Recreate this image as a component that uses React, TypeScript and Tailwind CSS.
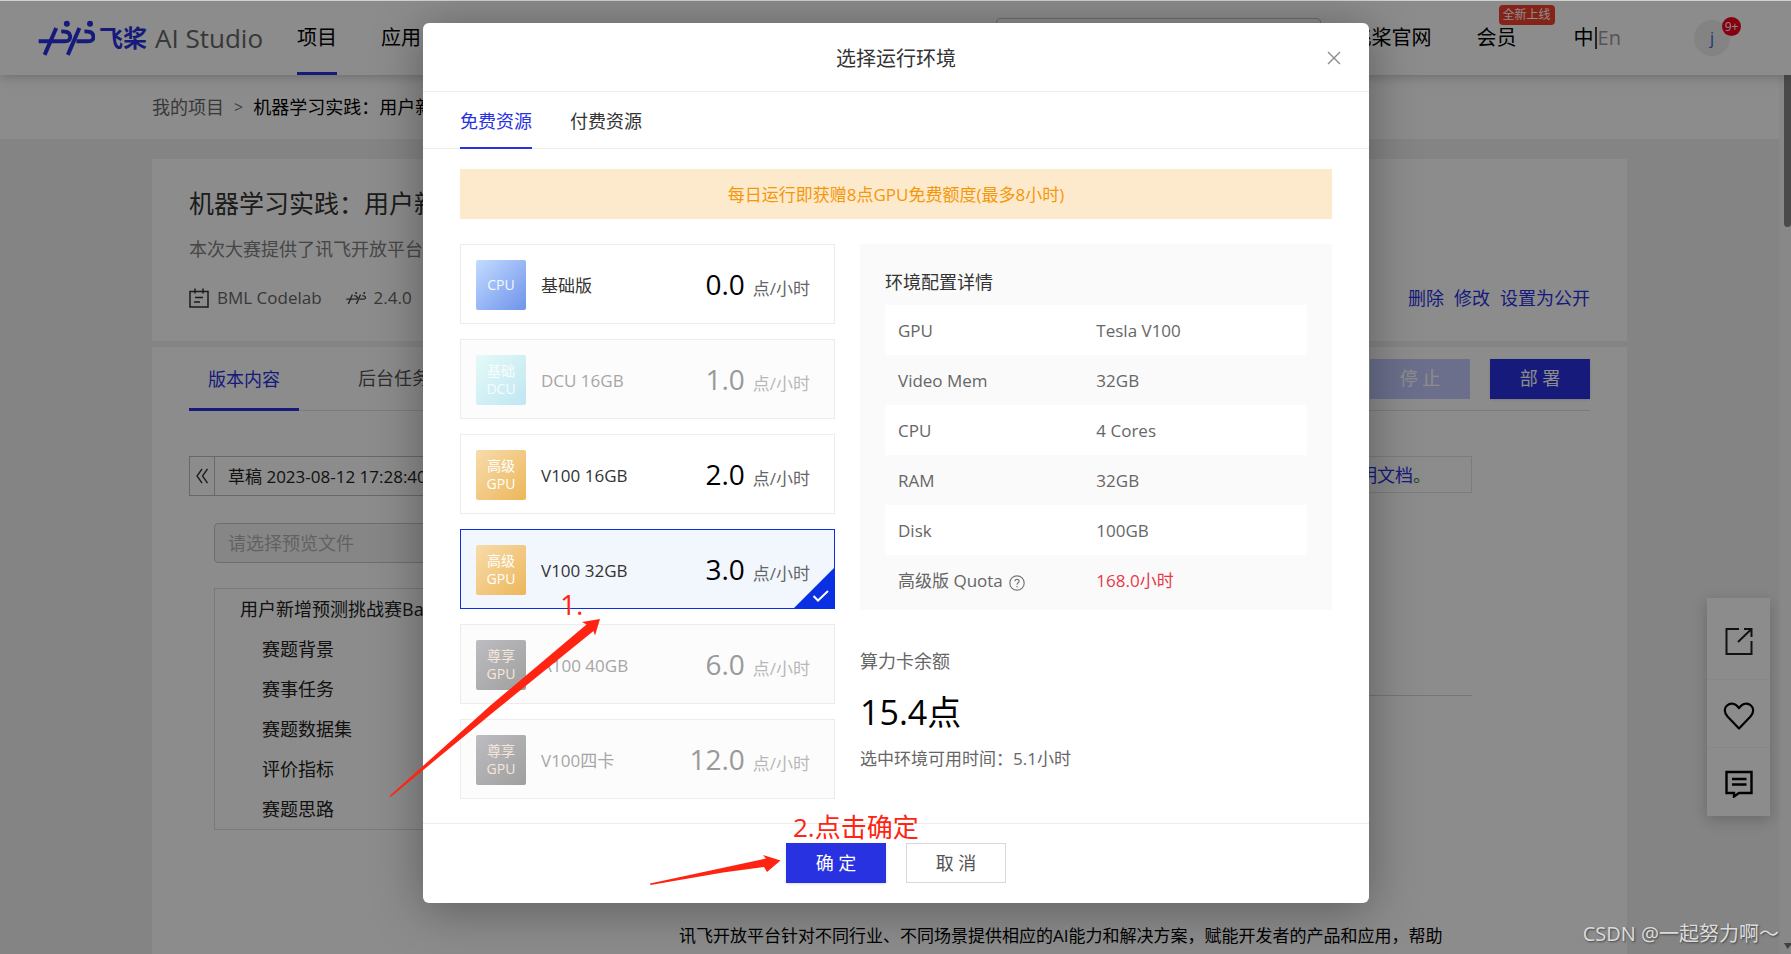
import { useState } from "react";

type Tone = "cpu" | "dcu" | "gpu" | "premium";

interface Environment {
  id: string;
  tone: Tone;
  badge: string[];
  name: string;
  price: string;
  disabled?: boolean;
}

const environments: Environment[] = [
  { id: "cpu", tone: "cpu", badge: ["CPU"], name: "基础版", price: "0.0" },
  { id: "dcu", tone: "dcu", badge: ["基础", "DCU"], name: "DCU 16GB", price: "1.0", disabled: true },
  { id: "v100-16", tone: "gpu", badge: ["高级", "GPU"], name: "V100 16GB", price: "2.0" },
  { id: "v100-32", tone: "gpu", badge: ["高级", "GPU"], name: "V100 32GB", price: "3.0" },
  { id: "a100-40", tone: "premium", badge: ["尊享", "GPU"], name: "A100 40GB", price: "6.0", disabled: true },
  { id: "v100-x4", tone: "premium", badge: ["尊享", "GPU"], name: "V100四卡", price: "12.0", disabled: true },
];

const toneClass: Record<Tone, string> = {
  cpu: "bg-linear-to-br from-[#c4dbff] to-[#6f93ea] text-white/90",
  dcu: "bg-linear-to-br from-[#e4faf7] to-[#bfe6f2] text-white/80",
  gpu: "bg-linear-to-br from-[#f7dcaa] via-[#f2c983] to-[#edb657] text-white",
  premium: "bg-linear-to-br from-[#bdbdc2] to-[#9f9f9f] text-[#f6e6d8]",
};

const specs = [
  ["GPU", "Tesla V100"],
  ["Video Mem", "32GB"],
  ["CPU", "4 Cores"],
  ["RAM", "32GB"],
  ["Disk", "100GB"],
];

const outline = ["赛题背景", "赛事任务", "赛题数据集", "评价指标", "赛题思路"];

function PaddleMark({ className }: { className: string }) {
  return (
    <svg viewBox="22 34 172 106" className={className} fill="none" stroke="currentColor" strokeWidth="12" aria-hidden="true">
      <path d="M77 57 L42 138" />
      <path d="M24 97 H102 C116 97 121 90 119 80 C116 69 108 67 92 67" />
      <path d="M147 57 L112 138" />
      <path d="M138 97 H172 C186 97 191 90 189 80 C186 69 178 67 162 67" />
      <circle cx="109" cy="44" r="9" fill="currentColor" stroke="none" />
      <circle cx="179" cy="44" r="9" fill="currentColor" stroke="none" />
    </svg>
  );
}

function Header() {
  return (
    <header className="relative z-10 flex h-[75px] shrink-0 items-center bg-white pr-[61px] pl-[38px] text-[20px] text-black shadow-[0_1px_12px_rgba(0,0,0,0.25)]">
      <a href="#home" className="flex items-center text-[#2932e1]">
        <PaddleMark className="h-[36px] w-[57px]" />
        <span className="ml-1 text-[24px] leading-[36px] font-bold">飞桨</span>
        <span className="ml-2 text-[26px] leading-[36px] text-[#666]">AI Studio</span>
      </a>
      <nav className="ml-[34px] flex h-full gap-11">
        <a href="#projects" className="flex items-center border-b-3 border-[#2932e1] pt-1">项目</a>
        <a href="#apps" className="flex items-center pt-px">应用</a>
      </nav>
      <div className="ml-auto flex h-full items-center pt-px">
        <input aria-label="搜索" className="h-10 w-[325px] rounded-sm border border-[#c4c4c4] bg-white" />
        <a href="#site" className="ml-[31px]">飞桨官网</a>
        <a href="#member" className="relative ml-[45px]">
          会员
          <span className="absolute -top-[18px] left-[22px] rounded-sm bg-[#f5402f] px-1 text-[12px] leading-5 whitespace-nowrap text-white">
            全新上线
          </span>
        </a>
        <a href="#lang" className="ml-[57px] flex items-center">
          中
          <span className="mx-px h-[22px] w-0.5 bg-[#444]" />
          <span className="text-[#999]">En</span>
        </a>
        <a href="#me" className="relative ml-[73px] flex size-9 items-center justify-center rounded-full bg-[#eee] text-[16px] text-[#3b5fd9]">
          j
          <span className="absolute -top-[3px] -right-[11px] flex size-[19px] items-center justify-center rounded-full bg-[#f5001d] text-[12px] text-white">
            9+
          </span>
        </a>
      </div>
    </header>
  );
}

function ProjectCard() {
  return (
    <section className="bg-white px-[37px] pt-6 pb-[29px]">
      <h1 className="text-[25px] leading-10 text-[#333]">机器学习实践：用户新增</h1>
      <p className="mt-3 leading-7 text-[#808080]">本次大赛提供了讯飞开放平台海量</p>
      <div className="mt-[21px] flex items-center leading-7 text-[#666]">
        <svg viewBox="0 0 20 20" className="size-5" fill="none" stroke="#333" strokeWidth="1.5" aria-hidden="true">
          <path d="M1 3.5 H19 V19 H1 Z M6 0.5 V5.5 M14 0.5 V5.5 M6 9.5 H14 M5 14 H11" />
        </svg>
        <span className="ml-2 text-[17px]">BML Codelab</span>
        <PaddleMark className="ml-6 h-[16px] w-[20px] text-[#444]" />
        <span className="ml-2 text-[17px]">2.4.0</span>
        <div className="ml-auto flex gap-2.5 text-[#2932e1]">
          <a href="#delete">删除</a>
          <a href="#edit">修改</a>
          <a href="#publish">设置为公开</a>
        </div>
      </div>
    </section>
  );
}

function VersionCard() {
  return (
    <section className="mt-1.5 flex-1 bg-white px-[37px]">
      <div className="flex h-16 border-b border-[#e2e2e2]">
        <a href="#versions" className="-mb-px flex items-center border-b-3 border-[#2932e1] px-[19px] pt-[3px] text-[#2932e1]">版本内容</a>
        <a href="#tasks" className="ml-[59px] flex items-center text-[#555]">后台任务</a>
        <div className="ml-auto flex items-center gap-5">
          <button type="button" disabled className="h-10 w-[100px] bg-[#c4cbff] text-white">停 止</button>
          <button type="button" className="h-10 w-[100px] bg-[#2932e1] text-white shadow-sm">部 署</button>
        </div>
      </div>
      <div className="flex gap-[65px] pt-[45px] pr-[118px]">
        <aside className="w-[425px] shrink-0">
          <div className="flex h-10 border border-[#bdbdbd] text-[#222]">
            <button type="button" aria-label="收起" className="flex w-[25px] items-center justify-center border-r border-[#bdbdbd]">
              <svg viewBox="0 0 12 16" className="h-4 w-3" fill="none" stroke="#333" strokeWidth="1.3" aria-hidden="true">
                <path d="M6 1 L1 8 L6 15 M11.500 1 L6.500 8 L11.500 15" />
              </svg>
            </button>
            <span className="pl-[13px] text-[17px] leading-10">草稿 2023-08-12 17:28:40</span>
          </div>
          <div className="pl-[25px]">
            <select
              aria-label="预览文件"
              disabled
              className="mt-[27px] h-10 w-full appearance-none rounded-sm border border-[#c8c8c8] bg-[#f5f5f5] pl-[13px] text-[#b3b3b3] opacity-100"
            >
              <option>请选择预览文件</option>
            </select>
            <ul className="mt-[25px] border border-[#ddd] leading-10 text-[#222]">
              <li className="pl-[25px]">
                用户新增预测挑战赛Baseline
                <ul className="pl-[22px]">
                  {outline.map((item) => (
                    <li key={item}>{item}</li>
                  ))}
                </ul>
              </li>
            </ul>
          </div>
        </aside>
        <article className="min-w-0 flex-1">
          <div className="h-[37px] border border-[#e2e2e2] pr-10 text-right leading-9 text-[#2932e1]">
            <a href="#docs">说明文档</a>
            <span className="text-[#2f7d32]">。</span>
          </div>
          <hr className="mt-[202px] border-[#d8d8d8]" />
          <p className="mt-[226px] text-[17px] leading-7 whitespace-nowrap text-black">
            讯飞开放平台针对不同行业、不同场景提供相应的AI能力和解决方案，赋能开发者的产品和应用，帮助
          </p>
        </article>
      </div>
    </section>
  );
}

function SideTools() {
  return (
    <div className="absolute right-[21px] bottom-[138px] flex w-[63px] flex-col items-center bg-white shadow-[0_4px_14px_rgba(0,0,0,0.2)]">
      <button type="button" aria-label="分享" className="flex h-[82px] w-full items-center justify-center border-b border-[#f6f6f6] pt-1">
        <svg viewBox="0 0 28 28" className="size-7" fill="none" stroke="#222" strokeWidth="2" aria-hidden="true">
          <path d="M14 2 H1.500 V27 H26.500 V14 M19 2 H26.500 V10 M26 2.500 L13 15" />
        </svg>
      </button>
      <button type="button" aria-label="收藏" className="flex h-[68px] w-full items-center justify-center border-b border-[#f6f6f6] pt-1 text-black">
        <svg viewBox="0 0 32 28" className="h-7 w-8" fill="none" stroke="currentColor" strokeWidth="2.2" strokeLinejoin="round" aria-hidden="true">
          <path d="M16 26.500 L4.500 14.500 C1 10.500 1 6 4 3.500 C7.500 0.500 12.500 1 16 6 C19.500 1 24.500 0.500 28 3.500 C31 6 31 10.500 27.500 14.500 Z" />
        </svg>
      </button>
      <button type="button" aria-label="评论" className="flex h-[68px] w-full items-center justify-center pt-1 text-black">
        <svg viewBox="0 0 28 28" className="size-7" fill="none" stroke="currentColor" strokeWidth="2.400" aria-hidden="true">
          <path d="M1.500 2 H26.500 V23 H14 L9 26.500 V23 H1.500 Z M7 9 H21.500 M7 14.500 H21.500" />
        </svg>
      </button>
    </div>
  );
}

function EnvironmentOption({ env, selected, onSelect }: { env: Environment; selected: boolean; onSelect: () => void }) {
  return (
    <label
      className={
        "relative flex h-20 items-center border pr-6 pl-[15px] " +
        (selected
          ? "border-[#0b2fe3] bg-[#f2f7fe]"
          : env.disabled
            ? "border-[#ececec] bg-[#fcfcfc]"
            : "border-[#ececec] bg-white")
      }
    >
      <input type="radio" name="environment" className="sr-only" checked={selected} disabled={env.disabled} onChange={onSelect} />
      <span className={"mt-0.5 flex size-[50px] flex-col items-center justify-center rounded-xs text-[14px] leading-[18px] " + toneClass[env.tone]}>
        {env.badge.map((line) => (
          <span key={line}>{line}</span>
        ))}
      </span>
      <span className={"mt-1 ml-[15px] text-[17px] leading-7 " + (env.disabled ? "text-[#a6a6a6]" : "text-[#333]")}>{env.name}</span>
      <span className="ml-auto flex items-baseline gap-2">
        <span className={"text-[28px] leading-9 " + (env.disabled ? "text-[#999]" : "text-black")}>{env.price}</span>
        <span className={"text-[17px] " + (env.disabled ? "text-[#b8b8b8]" : "text-[#666]")}>点/小时</span>
      </span>
      {selected && (
        <svg viewBox="0 0 40 40" className="absolute right-0 bottom-0 size-10" aria-hidden="true">
          <path d="M40 0 V40 H0 Z" fill="#0b2fe3" />
          <path d="M19.500 28 L24 32.500 L34 23" fill="none" stroke="#fff" strokeWidth="2" />
        </svg>
      )}
    </label>
  );
}

function Annotations() {
  return (
    <div className="pointer-events-none absolute inset-0 text-[#ff2312]">
      <svg viewBox="0 0 946 880" className="absolute top-0 left-0 h-[880px] w-[946px] overflow-visible" fill="#ff2312" aria-hidden="true">
        <path d="M-33.500 773 L68 682 L163.500 601.500 L159 599 L177 596 L172 612.500 L170.500 608 L73 687 L-32.500 774 Z" />
        <path d="M227 860.500 L343 835.500 L340 832 L357.500 837.500 L344 849 L341 844 L300 849.500 L227.500 862 Z" />
      </svg>
      <span className="absolute top-[561px] left-[137px] text-[28px] leading-10">1.</span>
      <span className="absolute top-[784px] left-[370px] text-[26px] leading-10 whitespace-nowrap">2.点击确定</span>
    </div>
  );
}

function EnvironmentDialog() {
  const [selectedId, setSelectedId] = useState("v100-32");

  return (
    <div role="dialog" aria-modal="true" aria-labelledby="dialog-title" className="relative w-[946px] rounded-md bg-white shadow-[0_6px_50px_rgba(0,0,0,0.35)]">
      <div className="relative flex h-[69px] items-center justify-center border-b border-[#ececec]">
        <h2 id="dialog-title" className="pt-1 text-[20px] leading-8 text-[#333]">选择运行环境</h2>
        <button type="button" aria-label="关闭" className="absolute top-[28px] right-[28px]">
          <svg viewBox="0 0 14 14" className="h-[14px] w-[14px]" fill="none" stroke="#888" strokeWidth="1.300" aria-hidden="true">
            <path d="M1 1 L13 13 M13 1 L1 13" />
          </svg>
        </button>
      </div>
      <div role="tablist" className="flex h-[57px] gap-[38px] border-b border-[#ececec] px-[37px]">
        <button type="button" role="tab" aria-selected="true" className="-mb-px border-b-2 border-[#2932e1] pt-1 text-[#2932e1]">免费资源</button>
        <button type="button" role="tab" aria-selected="false" className="-mb-px border-b-2 border-transparent pt-1 text-[#333]">付费资源</button>
      </div>
      <div className="px-[37px] pt-5 pb-6">
        <p className="h-[50px] bg-[#fdeacd] text-center text-[17px] leading-[52px] text-[#f5970a]">每日运行即获赠8点GPU免费额度(最多8小时)</p>
        <div className="mt-[25px] flex gap-[25px]">
          <div className="flex w-[375px] flex-col gap-[15px]">
            {environments.map((env) => (
              <EnvironmentOption key={env.id} env={env} selected={env.id === selectedId} onSelect={() => setSelectedId(env.id)} />
            ))}
          </div>
          <div className="flex-1 text-[#666]">
            <div className="bg-[#fafafa] px-[25px] pb-[5px]">
              <h3 className="pt-6 pb-[9px] leading-7 text-[#333]">环境配置详情</h3>
              <table className="w-full text-left text-[17px]">
                <tbody>
                  {specs.map(([name, value]) => (
                    <tr key={name} className="h-[50px] odd:bg-white">
                      <th scope="row" className="w-[47%] pt-0.5 pl-[13px] font-normal">{name}</th>
                      <td className="pt-0.5 pl-[13px]">{value}</td>
                    </tr>
                  ))}
                  <tr className="h-[50px]">
                    <th scope="row" className="pt-0.5 pl-[13px] font-normal">
                      <span className="flex items-center gap-1.5">
                        高级版 Quota
                        <svg viewBox="0 0 16 16" className="mt-1 size-4" fill="none" stroke="#777" strokeWidth="1.2" aria-hidden="true">
                          <circle cx="8" cy="8" r="7.200" />
                          <path d="M6 6.300 C6 3.600 10.200 3.700 10.100 6.200 C10 7.800 8 7.800 8 9.700 M8 11 V12.300" />
                        </svg>
                      </span>
                    </th>
                    <td className="pt-0.5 pl-[13px] text-[#e8394a]">168.0小时</td>
                  </tr>
                </tbody>
              </table>
            </div>
            <p className="mt-[37px] leading-7">算力卡余额</p>
            <p className="mt-[15px] text-[34px] leading-[44px] text-black">15.4点</p>
            <p className="mt-[11px] text-[17px] leading-7">选中环境可用时间：5.1小时</p>
          </div>
        </div>
      </div>
      <div className="flex justify-center gap-5 border-t border-[#ececec] pt-[19px] pb-5">
        <button type="button" className="h-10 w-[100px] bg-[#2932e1] text-white shadow-sm">确 定</button>
        <button type="button" className="h-10 w-[100px] border border-[#d9d9d9] bg-white text-[#555]">取 消</button>
      </div>
      <Annotations />
    </div>
  );
}

export default function App() {
  return (
    <div className="relative h-screen overflow-hidden font-['Open_Sans','Noto_Sans_CJK_SC',sans-serif] text-[18px]">
      <div className="flex h-full flex-col bg-[#f0f0f0]">
        <Header />
        <div className="flex min-h-0 flex-1">
          <main className="flex min-w-0 flex-1 flex-col overflow-hidden">
            <div className="bg-white">
              <div className="mx-auto flex h-16 max-w-[1475px] items-center gap-2.5">
                <a href="#mine" className="text-[#666]">我的项目</a>
                <span className="text-[16px] text-[#777]">&gt;</span>
                <span className="text-black">机器学习实践：用户新增</span>
              </div>
            </div>
            <div className="mx-auto flex w-full max-w-[1475px] flex-1 flex-col pt-5">
              <ProjectCard />
              <VersionCard />
            </div>
          </main>
          <div className="flex w-3 flex-col items-end justify-between bg-[#f8f8f8] pb-1">
            <div className="h-[152px] w-[7px] rounded-b-sm bg-[#888]" />
            <svg viewBox="0 0 7 7" className="size-[7px]" aria-hidden="true">
              <path d="M0 0 H7 V2 L3.500 6 Z" fill="#777" />
            </svg>
          </div>
        </div>
        <SideTools />
      </div>
      <div className="absolute inset-0 z-20 flex items-start justify-center border-t border-[#d0d0d0] bg-black/45 pt-[22px] pl-px">
        <EnvironmentDialog />
      </div>
      <div className="absolute right-[12px] bottom-1 z-30 text-[20px] leading-8 text-[#dcdcdc] [text-shadow:1px_1px_2px_#444]">
        CSDN @一起努力啊～
      </div>
    </div>
  );
}
